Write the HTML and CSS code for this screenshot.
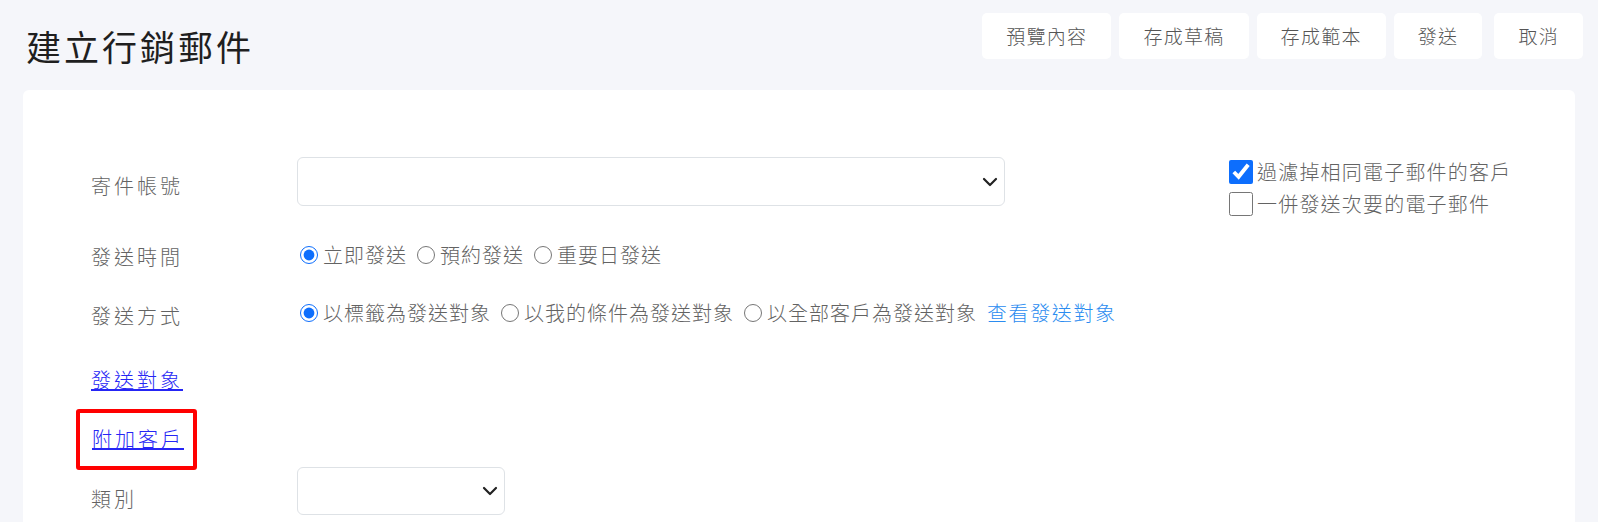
FILE: index.html
```html
<!DOCTYPE html>
<html lang="zh-Hant">
<head>
  <meta charset="UTF-8" />
  <meta name="viewport" content="width=device-width, initial-scale=1.0"/>
  <title>建立行銷郵件</title>
  <link rel="stylesheet" href="styles.css">
</head>
<body>
  <header class="topbar">
    <h1 class="page-title">建立行銷郵件</h1>
    <div class="actions">
      <button class="btn">預覽內容</button>
      <button class="btn">存成草稿</button>
      <button class="btn">存成範本</button>
      <button class="btn">發送</button>
      <button class="btn btn-last">取消</button>
    </div>
  </header>

  <main class="card">
    <div class="form">
      <div class="row row-sender">
        <label class="row-label">寄件帳號</label>
        <div class="select-box select-wide">
          <select></select>
          <svg class="chevron" width="16" height="10" viewBox="0 0 16 10"><path d="M2 2l6 6 6-6"/></svg>
        </div>
      </div>

      <div class="row row-time">
        <span class="row-label">發送時間</span>
        <div class="choices">
          <label class="choice"><input type="radio" name="time" checked>立即發送</label>
          <label class="choice"><input type="radio" name="time">預約發送</label>
          <label class="choice"><input type="radio" name="time">重要日發送</label>
        </div>
      </div>

      <div class="row row-mode">
        <span class="row-label">發送方式</span>
        <div class="choices">
          <label class="choice"><input type="radio" name="mode" checked>以標籤為發送對象</label>
          <label class="choice"><input type="radio" name="mode">以我的條件為發送對象</label>
          <label class="choice"><input type="radio" name="mode">以全部客戶為發送對象</label>
          <a class="view-link" href="#">查看發送對象</a>
        </div>
      </div>

      <div class="row row-target">
        <a class="row-label label-link" href="#">發送對象</a>
      </div>

      <div class="row row-extra">
        <div class="highlight">
          <a class="label-link" href="#">附加客戶</a>
        </div>
      </div>

      <div class="row row-category">
        <label class="row-label">類別</label>
        <div class="select-box select-small">
          <select></select>
          <svg class="chevron" width="16" height="10" viewBox="0 0 16 10"><path d="M2 2l6 6 6-6"/></svg>
        </div>
      </div>
    </div>

    <div class="options">
      <label class="check"><input type="checkbox" checked>過濾掉相同電子郵件的客戶</label>
      <label class="check"><input type="checkbox">一併發送次要的電子郵件</label>
    </div>
  </main>
</body>
</html>
```

FILE: styles.css
```css
body {
  margin: 0;
  background: #f5f6fa;
  font-family: "Noto Sans CJK TC", "Noto Sans CJK SC", sans-serif;
  font-weight: 300;
  color: #636363;
}

/* top bar */
.topbar {
  display: flex;
  justify-content: space-between;
  align-items: flex-start;
  height: 90px;
  padding: 13px 15px 0 26px;
  box-sizing: border-box;
}
.page-title {
  margin: 15px 0 0;
  font-size: 35px;
  line-height: 35px;
  font-weight: normal;
  letter-spacing: 3px;
  color: #1f1f1f;
}
.actions {
  display: flex;
  gap: 8px;
}
.btn {
  height: 46px;
  padding: 0 24px;
  border: none;
  border-radius: 5px;
  background: white;
  font-family: inherit;
  font-weight: 300;
  font-size: 19px;
  line-height: 46px;
  letter-spacing: 1.3px;
  color: #555;
}
.btn-last {
  margin-left: 4px;
}

/* card */
.card {
  display: flex;
  margin: 0 23px;
  padding-top: 67px;
  min-height: 480px;
  box-sizing: border-box;
  background: white;
  border-radius: 6px;
}
.form {
  width: 982px;
  flex: none;
}
.row {
  display: flex;
  align-items: flex-start;
}
.row-label {
  flex: none;
  width: 274px;
  padding-left: 68px;
  box-sizing: border-box;
  font-size: 20px;
  line-height: 28px;
  letter-spacing: 3px;
}

.select-box {
  display: flex;
  align-items: center;
  padding-right: 6px;
  border: 1px solid #dee2e6;
  border-radius: 6px;
  box-sizing: border-box;
}
.select-box select {
  flex: 1;
  height: 100%;
  border: none;
  background: transparent;
  appearance: none;
  outline: none;
  font-family: inherit;
}
.chevron {
  flex: none;
}
.chevron path {
  fill: none;
  stroke: #222;
  stroke-width: 2.2;
  stroke-linecap: round;
  stroke-linejoin: round;
}
.select-wide {
  width: 708px;
  height: 49px;
}
.select-small {
  width: 208px;
  height: 48px;
}

.row-sender .row-label {
  margin-top: 15px;
}
.row-time {
  margin-top: 35px;
}
.row-time .row-label {
  margin-top: 2px;
}
.row-mode {
  margin-top: 28px;
}
.row-mode .row-label {
  margin-top: 3px;
}

.choices {
  flex: none;
  display: flex;
  align-items: center;
  gap: 10px;
  height: 28px;
  padding-left: 3px;
  white-space: nowrap;
  font-size: 20px;
  line-height: 28px;
  letter-spacing: 1px;
}
.choice {
  flex: none;
  display: flex;
  align-items: center;
  gap: 5px;
}
.choice input {
  flex: none;
  width: 18px;
  height: 18px;
  margin: 0;
  accent-color: #0d6efd;
}
.view-link {
  flex: none;
  color: #2b8cf0;
  text-decoration: none;
  letter-spacing: 1.6px;
}

.row-target {
  margin-top: 36px;
}
.label-link {
  color: #2525f5;
  text-decoration: underline;
  font-size: 20px;
  line-height: 28px;
  letter-spacing: 3px;
}
.row-extra {
  margin-top: 15px;
}
.highlight {
  margin-left: 53px;
  padding: 12px 9px 12px 12px;
  border: 4px solid #ff0000;
  border-radius: 3px;
  line-height: 28px;
}
.row-category {
  margin-top: -3px;
}
.row-category .row-label {
  margin-top: 18px;
}

/* right side options */
.options {
  margin-left: 224px;
  margin-top: -1px;
}
.check {
  display: flex;
  align-items: center;
  gap: 4px;
  height: 32px;
  white-space: nowrap;
  font-size: 20px;
  line-height: 32px;
  letter-spacing: 1.2px;
}
.check input {
  flex: none;
  width: 24px;
  height: 24px;
  margin: 0;
  accent-color: #0d6efd;
}
```
